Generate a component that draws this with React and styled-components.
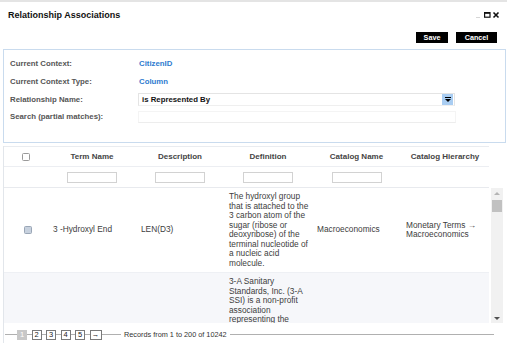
import React from 'react'
import styled, { createGlobalStyle } from 'styled-components'

const GlobalStyle = createGlobalStyle`
    html, body {
        margin: 0;
        padding: 0;
        background: #fff;
    }
    body {
        font-family: "Liberation Sans", Arial, sans-serif;
    }
    * {
        box-sizing: border-box;
    }
`;

const Dialog = styled.div`
    width: 507px;
    height: 343px;
    overflow: hidden;
    border-top: 2px solid #e4e4e4;
    display: flex;
    flex-direction: column;
`;

const TitleBar = styled.div`
    height: 26px;
    flex: none;
    display: flex;
    align-items: center;
    justify-content: space-between;
    padding: 0 6px 0 8px;
`;

const Title = styled.h1`
    margin: 0;
    font-size: 9px;
    font-weight: bold;
    color: #111;
`;

const Toolbar = styled.div`
    flex: none;
    display: flex;
    justify-content: flex-end;
    gap: 8px;
    padding: 4px 10px 6px 0;
`;

const Button = styled.button`
    width: ${p => p.$width}px;
    height: 11px;
    padding: 0;
    border: 0;
    background: #000;
    color: #fff;
    font-family: "Liberation Sans", Arial, sans-serif;
    font-size: 7.2px;
    font-weight: bold;
    line-height: 11px;
`;

const FormPanel = styled.div`
    flex: none;
    height: 94px;
    margin: 0 1px 0 3px;
    border: 1px solid #c9dbee;
    padding: 5px 0 0 6px;
`;

const FormRow = styled.div`
    display: grid;
    grid-template-columns: 128px 320px;
    align-items: center;
    height: 17.7px;
`;

const Label = styled.span`
    font-size: 7.8px;
    font-weight: bold;
    color: #555;
`;

const Value = styled.span`
    padding-left: 1px;
    font-size: 7.8px;
    font-weight: bold;
    color: #2e7bcf;
`;

const Select = styled.div`
    width: 317px;
    height: 13px;
    display: flex;
    align-items: center;
    justify-content: space-between;
    border: 1px solid #e4e4e4;
    border-bottom-color: #efefef;
    padding: 0 1px 0 3px;
    font-size: 7.8px;
    font-weight: bold;
    color: #111;
`;

const SelectButton = styled.span`
    width: 11px;
    height: 11px;
    display: flex;
    align-items: center;
    justify-content: center;
    background: #a9cdf2;
`;

const SearchInput = styled.div`
    width: 318px;
    height: 12px;
    border: 1px solid #f4f4f4;
    border-bottom-color: #ededed;
`;

const TablePanel = styled.div`
    flex: 1;
    min-height: 0;
    margin: 3px 0 0 3px;
    border-left: 1px solid #e2e6eb;
    display: flex;
    flex-direction: column;
`;

const Columns = styled.div`
    display: grid;
    grid-template-columns: 44px 88px 88px 88px 89px 88px;
    width: 485px;
`;

const HeadRow = styled(Columns)`
    height: 21px;
    align-items: center;
    border-top: 1px solid #e9ecf0;
    border-bottom: 1px solid #eceef2;
`;

const HeadCell = styled.div`
    text-align: center;
    font-size: 8px;
    font-weight: bold;
    color: #444;
`;

const FilterRow = styled(Columns)`
    height: 21px;
    align-items: center;
    border-bottom: 1px solid #e8eaee;
`;

const FilterCell = styled.div`
    display: flex;
    justify-content: center;
`;

const FilterInput = styled.div`
    width: 50px;
    height: 11px;
    border: 1px solid #d2d2d2;
    background: #fff;
`;

const Checkbox = styled.span`
    display: block;
    width: 8px;
    height: 8px;
    margin: 0 auto;
    border: 1px solid ${p => (p.$filled ? '#9aa6b6' : '#9a9a9a')};
    border-radius: 1.5px;
    background: ${p => (p.$filled ? '#c7d1de' : '#fff')};
`;

const BodyArea = styled.div`
    display: flex;
    gap: 1px;
    height: 135px;
    flex: none;
`;

const Rows = styled.div`
    width: 486px;
    overflow: hidden;
`;

const Row = styled(Columns)`
    align-items: center;
    padding: 4px 0;
    background: ${p => (p.$alt ? '#f6f7fa' : '#fff')};
    border-bottom: 1px solid #eef0f4;
`;

const Cell = styled.div`
    padding: 0 2px 0 5px;
    font-size: 8.3px;
    line-height: 9.5px;
    color: #3d3d3d;
`;

const Scrollbar = styled.div`
    width: 12px;
    background: #f1f1f1;
    display: flex;
    flex-direction: column;
    align-items: center;
`;

const ScrollArrow = styled.span`
    height: 10px;
    display: flex;
    align-items: center;
    &::before {
        content: '';
        border-left: 3px solid transparent;
        border-right: 3px solid transparent;
        ${p => (p.$down
            ? 'border-top: 3px solid #505050;'
            : 'border-bottom: 3px solid #b4b4b4;')}
    }
`;

const Track = styled.div`
    flex: 1;
    width: 100%;
    padding: 2px 1px 0;
`;

const Thumb = styled.div`
    height: 12px;
    background: #c1c1c1;
`;

const Footer = styled.div`
    padding: 6px 0 0 13px;
    width: 490px;
`;

const Pager = styled.div`
    height: 11px;
    display: flex;
    align-items: center;
    gap: 4.5px;
    margin-left: -12px;
    padding-left: 12px;
    background: linear-gradient(#b0b0b0, #b0b0b0) left center / 100% 1px no-repeat;
`;

const PageButton = styled.span`
    width: ${p => (p.$wide ? 12 : 10)}px;
    height: 10px;
    display: flex;
    align-items: center;
    justify-content: center;
    border: 1px solid ${p => (p.$active ? '#c8c8c8' : '#7a7a7a')};
    background: ${p => (p.$active ? '#c8c8c8' : '#fff')};
    color: ${p => (p.$active ? '#fff' : '#222')};
    font-size: 7.5px;
`;

const Records = styled.span`
    margin-left: 15px;
    padding: 0 3px;
    background: #fff;
    font-size: 7.3px;
    color: #333;
`;

const columns = ['Term Name', 'Description', 'Definition', 'Catalog Name', 'Catalog Hierarchy'];

const rows = [
    {
        term: '3 -Hydroxyl End',
        description: 'LEN(D3)',
        definition: 'The hydroxyl group that is attached to the 3 carbon atom of the sugar (ribose or deoxyribose) of the terminal nucleotide of a nucleic acid molecule.',
        catalog: 'Macroeconomics',
        hierarchy: 'Monetary Terms → Macroeconomics',
        checked: true,
    },
    {
        term: '',
        description: '',
        definition: '3-A Sanitary Standards, Inc. (3-A SSI) is a non-profit association representing the interests of equipment fabricators, processors and regulators.',
        catalog: '',
        hierarchy: '',
    },
];

function WindowControls() {
    return (
        <svg width="26" height="8" viewBox="0 0 26 8">
            <line x1="1" y1="6.5" x2="5" y2="6.5" stroke="#d6d6d6" strokeWidth="1" />
            <rect x="9.6" y="1.6" width="5.4" height="4.6" fill="none" stroke="#111" strokeWidth="1.2" />
            <line x1="9.6" y1="2" x2="15" y2="2" stroke="#111" strokeWidth="1.6" />
            <path d="M18.5 1.5 L23.5 6.5 M23.5 1.5 L18.5 6.5" stroke="#111" strokeWidth="1.6" />
        </svg>
    );
}

function DropArrow() {
    return (
        <svg width="6" height="5" viewBox="0 0 6 5">
            <rect x="0" y="0" width="6" height="1" fill="#000" />
            <path d="M0 2 L6 2 L3 5 Z" fill="#000" />
        </svg>
    );
}

export default function App() {
    return (
        <>
            <GlobalStyle />
            <Dialog>
                <TitleBar>
                    <Title>Relationship Associations</Title>
                    <WindowControls />
                </TitleBar>
                <Toolbar>
                    <Button $width={32}>Save</Button>
                    <Button $width={41}>Cancel</Button>
                </Toolbar>
                <FormPanel>
                    <FormRow>
                        <Label>Current Context:</Label>
                        <Value>CitizenID</Value>
                    </FormRow>
                    <FormRow>
                        <Label>Current Context Type:</Label>
                        <Value>Column</Value>
                    </FormRow>
                    <FormRow>
                        <Label>Relationship Name:</Label>
                        <Select>
                            is Represented By
                            <SelectButton><DropArrow /></SelectButton>
                        </Select>
                    </FormRow>
                    <FormRow>
                        <Label>Search (partial matches):</Label>
                        <SearchInput />
                    </FormRow>
                </FormPanel>
                <TablePanel>
                    <HeadRow>
                        <HeadCell><Checkbox /></HeadCell>
                        {columns.map(c => <HeadCell key={c}>{c}</HeadCell>)}
                    </HeadRow>
                    <FilterRow>
                        <FilterCell />
                        <FilterCell><FilterInput /></FilterCell>
                        <FilterCell><FilterInput /></FilterCell>
                        <FilterCell><FilterInput /></FilterCell>
                        <FilterCell><FilterInput /></FilterCell>
                        <FilterCell />
                    </FilterRow>
                    <BodyArea>
                        <Rows>
                            {rows.map((r, i) => (
                                <Row key={i} $alt={i % 2 === 1}>
                                    <Cell>{r.checked && <Checkbox $filled />}</Cell>
                                    <Cell>{r.term}</Cell>
                                    <Cell>{r.description}</Cell>
                                    <Cell>{r.definition}</Cell>
                                    <Cell>{r.catalog}</Cell>
                                    <Cell>{r.hierarchy}</Cell>
                                </Row>
                            ))}
                        </Rows>
                        <Scrollbar>
                            <ScrollArrow />
                            <Track><Thumb /></Track>
                            <ScrollArrow $down />
                        </Scrollbar>
                    </BodyArea>
                    <Footer>
                        <Pager>
                            <PageButton $active>1</PageButton>
                            <PageButton>2</PageButton>
                            <PageButton>3</PageButton>
                            <PageButton>4</PageButton>
                            <PageButton>5</PageButton>
                            <PageButton $wide>→</PageButton>
                            <Records>Records from 1 to 200 of 10242</Records>
                        </Pager>
                    </Footer>
                </TablePanel>
            </Dialog>
        </>
    )
}
